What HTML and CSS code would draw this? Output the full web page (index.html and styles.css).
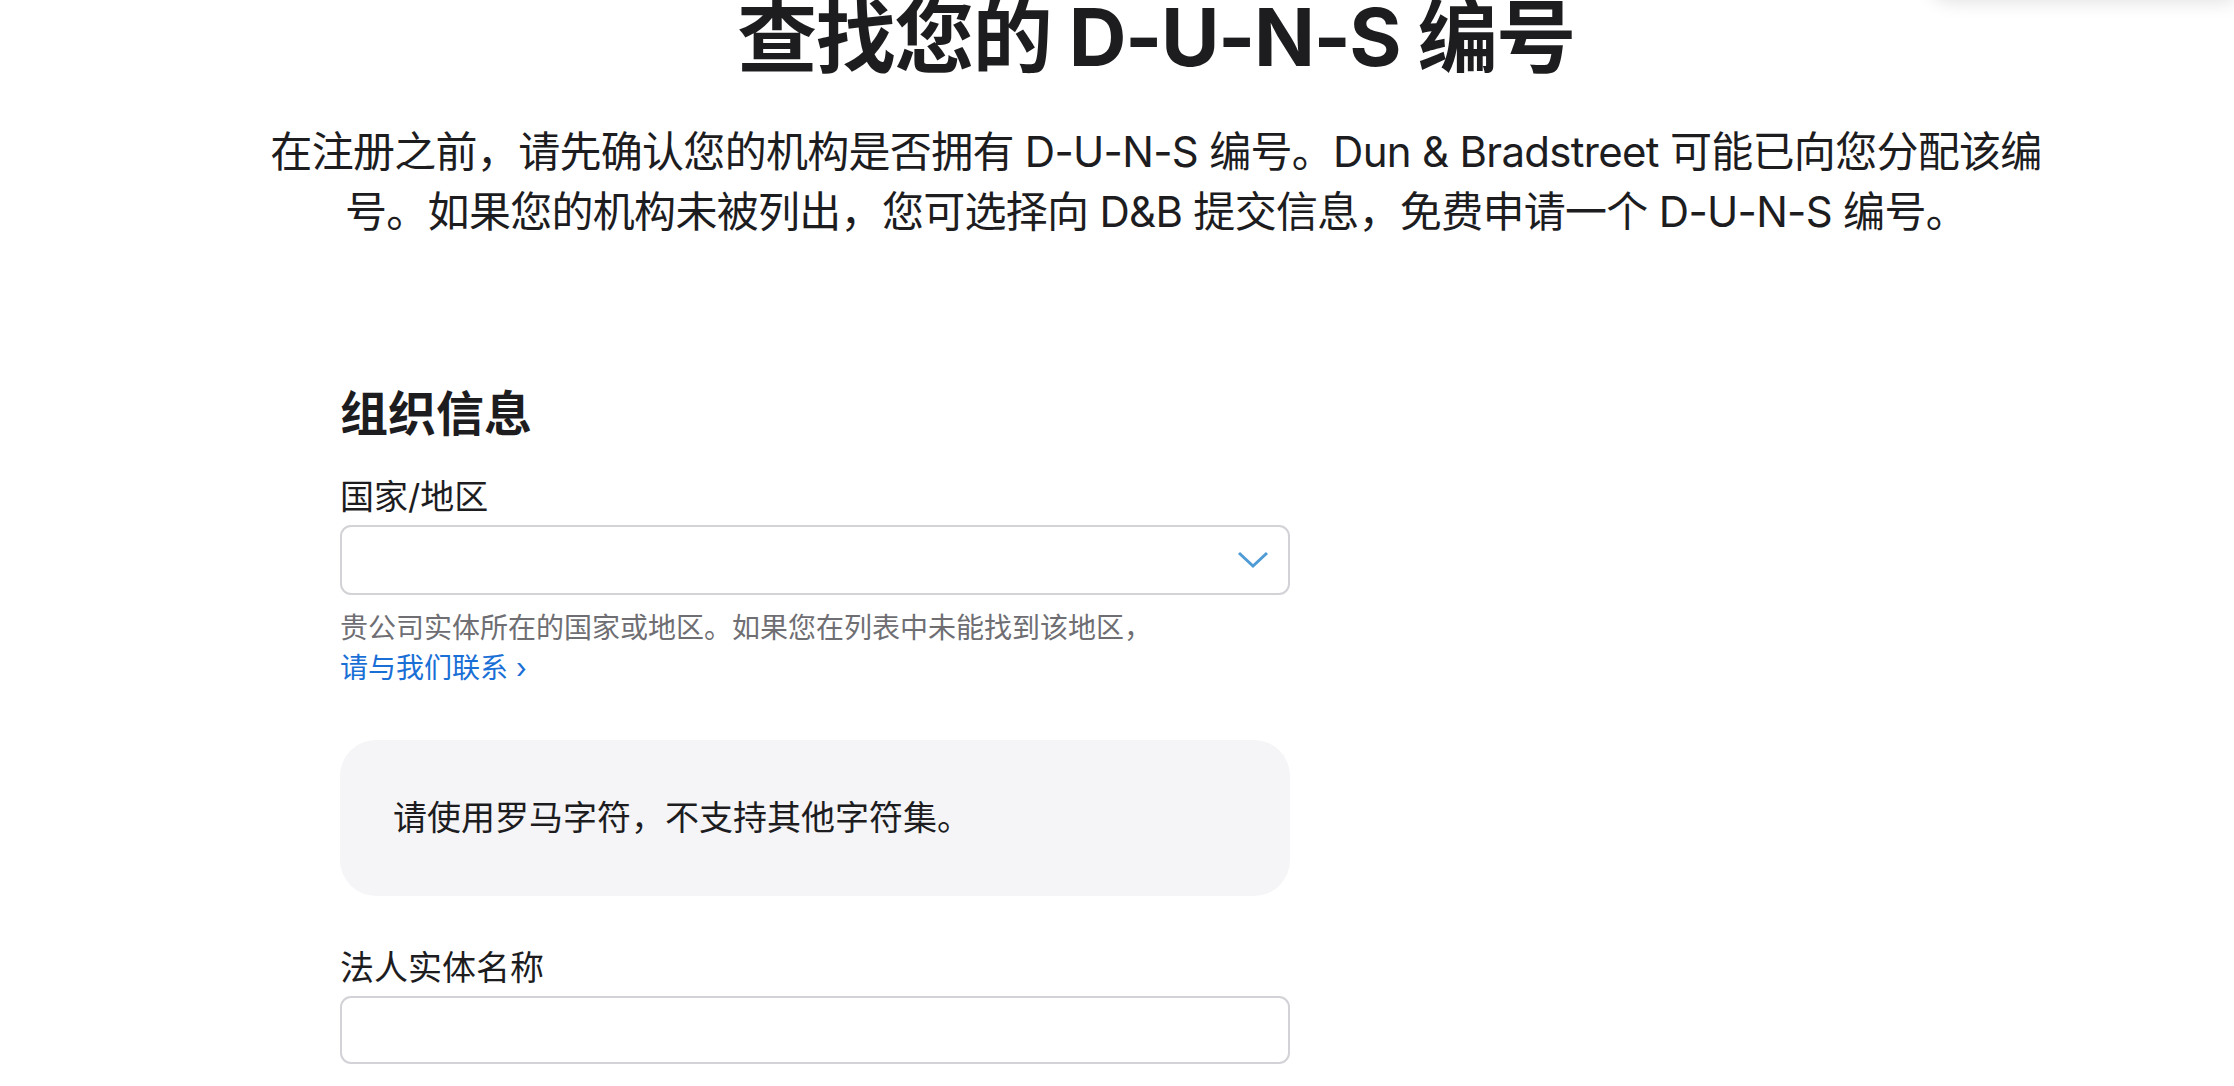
FILE: index.html
```html
<!DOCTYPE html>
<html lang="zh-CN">
<head>
  <meta charset="UTF-8" />
  <meta name="viewport" content="width=device-width, initial-scale=1" />
  <title>查找您的 D-U-N-S 编号</title>
  <link rel="stylesheet" href="styles.css">
</head>
<body>

<div class="menu-shadow" aria-hidden="true"></div>

<main class="page">
  <header class="hero">
    <h1>查找您的 D-U-N-S 编号</h1>
    <p>在注册之前，请先确认您的机构是否拥有 D-U-N-S 编号。Dun &amp; Bradstreet 可能已向您分配该编号。如果您的机构未被列出，您可选择向 D&amp;B 提交信息，免费申请一个 D-U-N-S 编号。</p>
  </header>

  <form class="form">
    <h2>组织信息</h2>

    <div class="field">
      <label for="country">国家/地区</label>
      <div class="select-wrap">
        <select id="country" aria-label="国家/地区">
          <option value=""></option>
        </select>
        <svg class="chevron" width="32" height="18" viewBox="0 0 32 18" aria-hidden="true">
          <polyline points="2,2 16,15 30,2" fill="none" stroke="#4f9bd6" stroke-width="3" />
        </svg>
      </div>
      <p class="help">贵公司实体所在的国家或地区。如果您在列表中未能找到该地区，<br>
        <a href="#" class="link">请与我们联系 ›</a></p>
    </div>

    <div class="notice">请使用罗马字符，不支持其他字符集。</div>

    <div class="field">
      <label for="legalName">法人实体名称</label>
      <input type="text" id="legalName" />
    </div>
  </form>
</main>

</body>
</html>
```

FILE: styles.css
```css
* {
  box-sizing: border-box;
}
html, body {
  overflow: hidden;
}
body {
  margin: 0;
  padding: 0 0 0 78px;
  background: #fff;
  color: #1d1d1f;
  font-family: Inter, "Noto Sans CJK SC", sans-serif;
}

.menu-shadow {
  position: absolute;
  top: -60px;
  right: 0;
  width: 306px;
  height: 60px;
  background: #fff;
  border-radius: 0 0 0 24px;
  box-shadow: 0 2px 18px rgb(0 0 0 / 0.12);
}

.page {
  width: 1960px;
  margin: 0 auto;
}

.hero {
  text-align: center;
}
.hero h1 {
  margin: -7px 0 0;
  font-size: 80px;
  line-height: 88px;
  font-weight: 700;
  letter-spacing: -1.5px;
}
.hero p {
  max-width: 1800px;
  margin: 41px auto 0;
  font-size: 42px;
  line-height: 60px;
  font-weight: 400;
  letter-spacing: -0.7px;
}

.form {
  width: 950px;
  margin: 144px 0 0 164px;
}
.form h2 {
  margin: 0 0 33px;
  font-size: 48px;
  line-height: 56px;
  font-weight: 700;
}

.field label {
  display: block;
  font-size: 34px;
  line-height: 44px;
  margin-bottom: 6px;
}

.select-wrap {
  position: relative;
}
select, input[type=text] {
  display: block;
  width: 100%;
  height: 70px;
  border: 2px solid #d2d2d7;
  border-radius: 11px;
  background: #fff;
  font: inherit;
  font-size: 34px;
  padding: 0 30px;
  appearance: none;
  -webkit-appearance: none;
  color: #1d1d1f;
}
input[type=text] {
  height: 68px;
}
.chevron {
  position: absolute;
  right: 21px;
  top: 26px;
}

.help {
  margin: 13px 0 0;
  font-size: 28px;
  line-height: 40px;
  color: #6e6e73;
}
.link {
  color: #1a6fd6;
  text-decoration: none;
}

.notice {
  margin: 52px 0 50px;
  height: 156px;
  display: flex;
  align-items: center;
  padding: 0 53px;
  background: #f5f5f7;
  border-radius: 36px;
  font-size: 34px;
  line-height: 44px;
}
```
